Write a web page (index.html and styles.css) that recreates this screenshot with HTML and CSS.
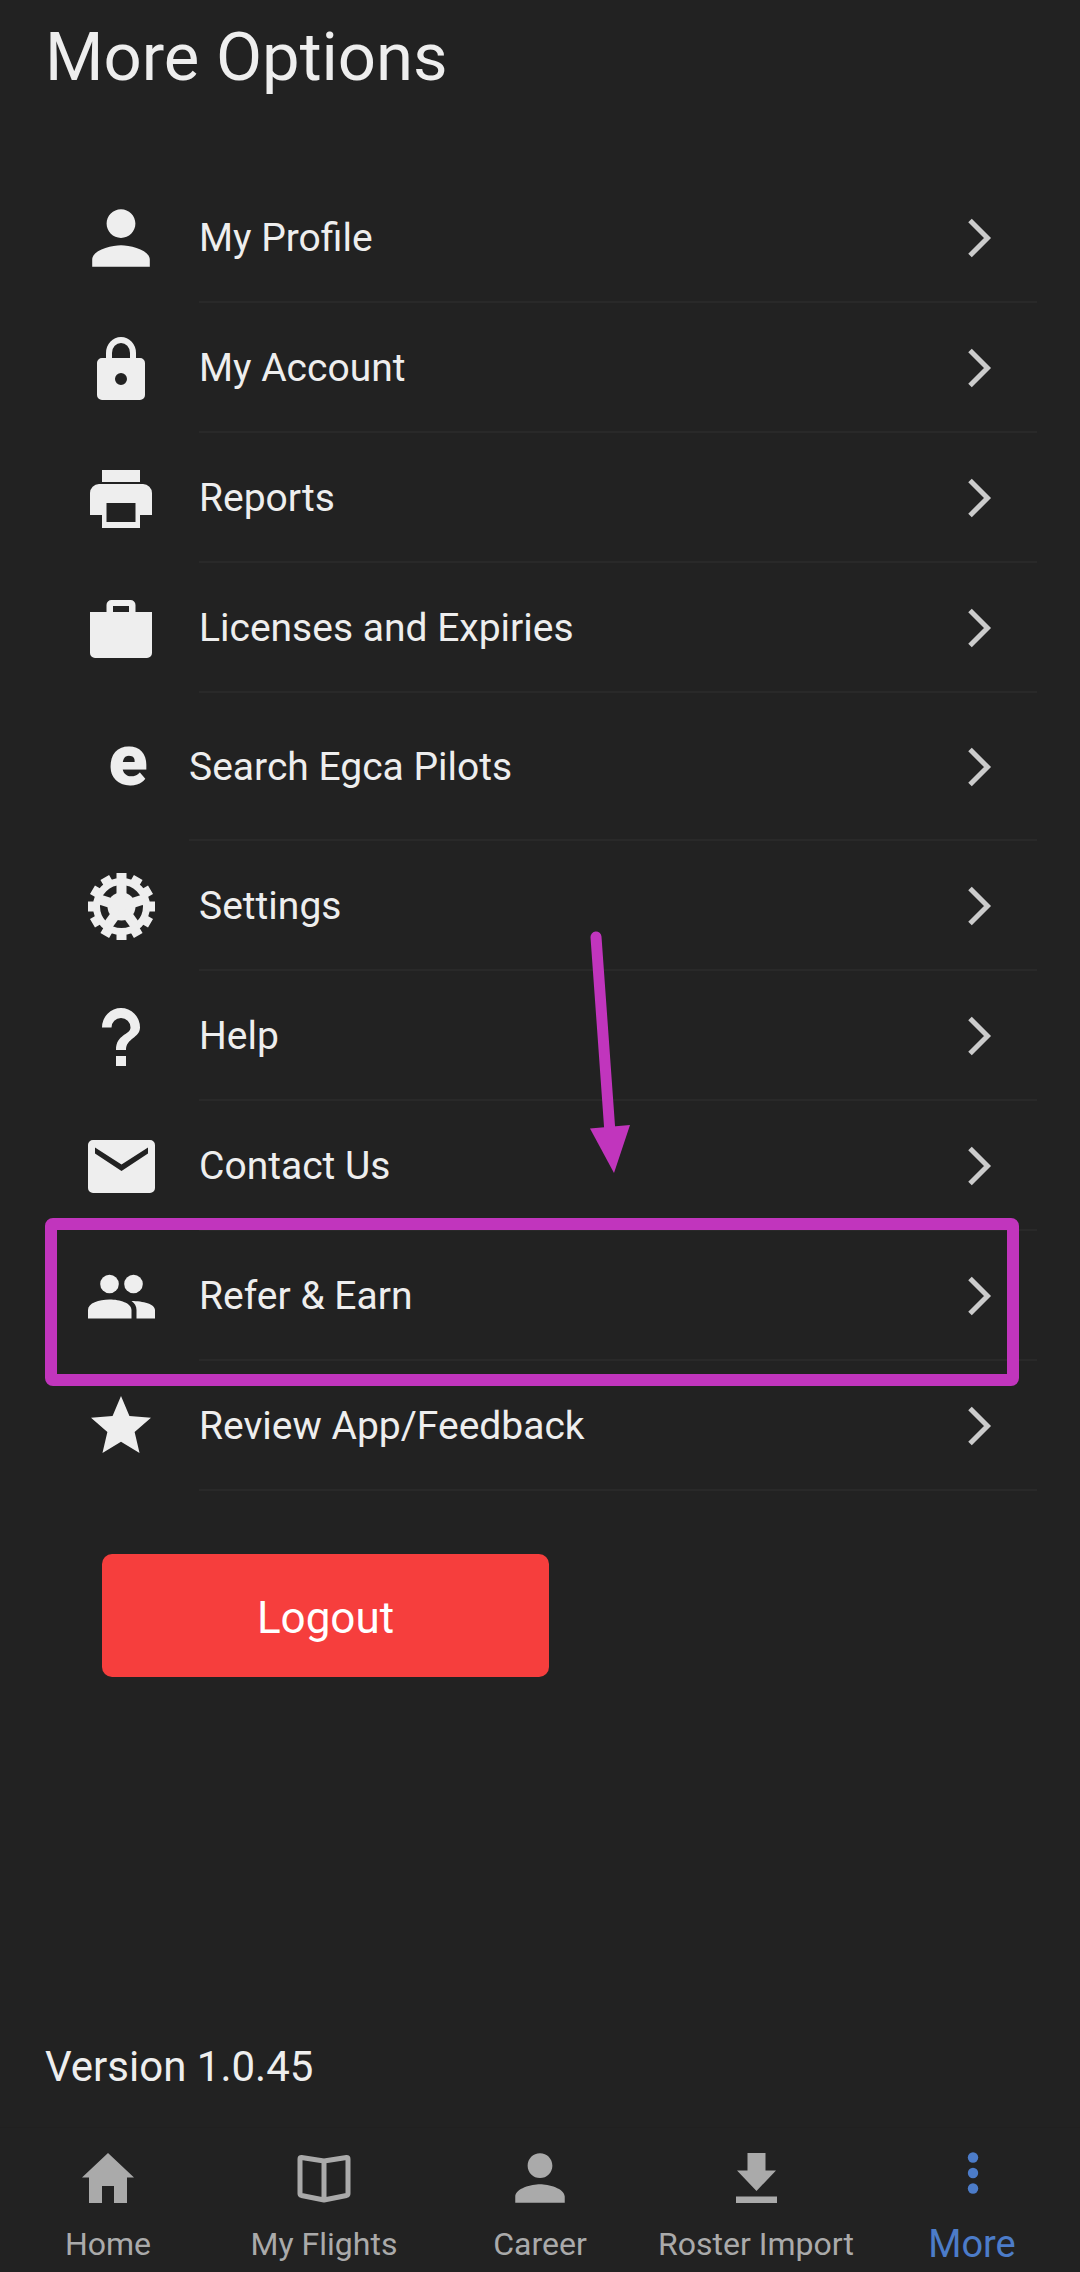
FILE: index.html
```html
<!DOCTYPE html>
<html lang="en">
<head>
<meta charset="utf-8">
<meta name="viewport" content="width=device-width, initial-scale=1">
<title>More Options</title>
<link rel="stylesheet" href="styles.css">
</head>
<body>
<svg class="defs" aria-hidden="true">
  <symbol id="chevron" viewBox="0 0 24 40"><path d="M2 2.500L19.500 20L2 37.500" fill="none" stroke="currentColor" stroke-width="5"/></symbol>
  <symbol id="person" viewBox="2 2 20 20"><path d="M12 12c2.210 0 4-1.790 4-4s-1.790-4-4-4-4 1.790-4 4 1.790 4 4 4zm0 2c-2.670 0-8 1.340-8 4v2h16v-2c0-2.660-5.330-4-8-4z"/></symbol>
</svg>
<main class="page">
  <h1 class="title">More Options</h1>
  <ul class="menu">
    <li><a class="row" href="#profile">
      <svg class="icon"><use href="#person"/></svg>
      <span class="body">My Profile<svg class="chevron"><use href="#chevron"/></svg></span></a></li>
    <li><a class="row" href="#account">
      <svg class="icon" viewBox="0 0 72 72"><path d="M24 28V21a12 13 0 0 1 24 0v7" fill="none" stroke="currentColor" stroke-width="6"/><path fill-rule="evenodd" d="M17 26h38a5 5 0 0 1 5 5v32a5 5 0 0 1-5 5H17a5 5 0 0 1-5-5V31a5 5 0 0 1 5-5zM36 41a6 6 0 1 0 0 12a6 6 0 1 0 0-12z"/></svg>
      <span class="body">My Account<svg class="chevron"><use href="#chevron"/></svg></span></a></li>
    <li><a class="row" href="#reports">
      <svg class="icon" viewBox="0 0 72 72"><path d="M17 8h38v12H17z"/><path fill-rule="evenodd" d="M14 22h44a9 9 0 0 1 9 9v22H55v13H17V53H5V31a9 9 0 0 1 9-9zM21.500 41v19h29V41z"/></svg>
      <span class="body">Reports<svg class="chevron"><use href="#chevron"/></svg></span></a></li>
    <li><a class="row" href="#licenses">
      <svg class="icon" viewBox="0 0 72 72"><path fill-rule="evenodd" d="M5 20h16.500v-7a5 5 0 0 1 5-5h19a5 5 0 0 1 5 5v7H67v41a5 5 0 0 1-5 5H10a5 5 0 0 1-5-5zM28 14v6h16v-6z"/></svg>
      <span class="body">Licenses and Expiries<svg class="chevron"><use href="#chevron"/></svg></span></a></li>
    <li><a class="row row-egca" href="#egca">
      <span class="icon icon-letter" aria-hidden="true">e</span>
      <span class="body">Search Egca Pilots<svg class="chevron"><use href="#chevron"/></svg></span></a></li>
    <li><a class="row" href="#settings">
      <svg class="icon" viewBox="0 0 72 72"><g transform="translate(36.500 36.500)">
        <circle r="25" fill="none" stroke="currentColor" stroke-width="7"/>
        <circle r="14"/>
        <g stroke="currentColor" stroke-width="10">
          <path id="spoke" d="M0 0V-23"/><use href="#spoke" transform="rotate(72)"/><use href="#spoke" transform="rotate(144)"/><use href="#spoke" transform="rotate(216)"/><use href="#spoke" transform="rotate(288)"/>
          <path id="teeth" d="M0-33.500V-25M0 33.500V25"/><use href="#teeth" transform="rotate(30)"/><use href="#teeth" transform="rotate(60)"/><use href="#teeth" transform="rotate(90)"/><use href="#teeth" transform="rotate(120)"/><use href="#teeth" transform="rotate(150)"/>
        </g></g></svg>
      <span class="body">Settings<svg class="chevron"><use href="#chevron"/></svg></span></a></li>
    <li><a class="row" href="#help">
      <svg class="icon" viewBox="0 0 72 72"><path d="M17 27.500A19 19.500 0 0 1 55 27.500C55 38 41 38 41 50H31C31 34 45.500 35 45.500 27.500A9.500 9.500 0 0 0 26.500 27.500zM31 56h10v10H31z"/></svg>
      <span class="body">Help<svg class="chevron"><use href="#chevron"/></svg></span></a></li>
    <li><a class="row" href="#contact">
      <svg class="icon" viewBox="0 0 72 72"><path fill-rule="evenodd" d="M8 10h57a5 5 0 0 1 5 5v43a5 5 0 0 1-5 5H8a5 5 0 0 1-5-5V15a5 5 0 0 1 5-5zM10 17.500v6L36.500 41L63 23.500v-6L36.500 34.500z"/></svg>
      <span class="body">Contact Us<svg class="chevron"><use href="#chevron"/></svg></span></a></li>
    <li class="featured"><a class="row" href="#refer">
      <svg class="icon" viewBox="0 0 72 72"><circle cx="24.500" cy="24" r="9.300"/><circle cx="48.500" cy="24" r="9.300"/><path d="M3 58.500V50c0-7 11-10.500 21.500-10.500S46.500 43 46.500 50v8.500zM46.500 41C58 41 70 44 70 50v8.500H51.500V50c0-4-2-7-5-9z"/></svg>
      <span class="body">Refer &amp; Earn<svg class="chevron"><use href="#chevron"/></svg></span></a>
      <svg class="pointer" viewBox="0 0 48 244" aria-hidden="true"><path d="M10 8L24 204" fill="none" stroke="currentColor" stroke-width="11" stroke-linecap="round"/><path d="M4 199.500L44 196L28 244z"/></svg>
    </li>
    <li><a class="row" href="#review">
      <svg class="icon" viewBox="0 0 24 24"><path d="M12 17.270L18.180 21l-1.640-7.030L22 9.240l-7.190-.610L12 2 9.190 8.630 2 9.240l5.460 4.730L5.820 21z"/></svg>
      <span class="body">Review App/Feedback<svg class="chevron"><use href="#chevron"/></svg></span></a></li>
  </ul>
  <button class="logout" type="button">Logout</button>
  <p class="version">Version 1.0.45</p>
</main>
<nav class="tabs">
  <a class="tab" href="#home"><svg class="tab-icon" viewBox="0 0 60 60"><path d="M30 5L56 29.500H49V55H36V38H24V55H11V29.500H4z"/></svg>Home</a>
  <a class="tab" href="#flights"><svg class="tab-icon" viewBox="0 0 60 60"><path d="M30 13L7.500 9.500Q6 9.500 6 11V45.500Q6 47 7.500 47.500L30 52L52.500 47.500Q54 47 54 45.500V11Q54 9.500 52.500 9.500zV50" fill="none" stroke="currentColor" stroke-width="5" stroke-linejoin="round"/></svg>My Flights</a>
  <a class="tab" href="#career"><svg class="tab-icon" viewBox="2.300 2.300 19.400 19.400"><path d="M12 12c2.210 0 4-1.790 4-4s-1.790-4-4-4-4 1.790-4 4 1.790 4 4 4zm0 2c-2.670 0-8 1.340-8 4v2h16v-2c0-2.660-5.330-4-8-4z"/></svg>Career</a>
  <a class="tab" href="#roster"><svg class="tab-icon" viewBox="0 0 60 60"><path d="M21.500 5h18v17.500H50L30.500 43L11 22.500h10.500zM10 48.500h41V55H10z"/></svg>Roster Import</a>
  <a class="tab tab-active" href="#more" aria-current="page"><svg class="tab-icon" viewBox="0 0 60 60"><circle cx="31" cy="9.500" r="5.200"/><circle cx="31" cy="25" r="5.200"/><circle cx="31" cy="40.500" r="5.200"/></svg>More</a>
</nav>
</body>
</html>
```
FILE: styles.css
```css
* { box-sizing: border-box; }

body {
  margin: 0;
  min-height: 100vh;
  display: flex;
  flex-direction: column;
  background: #222;
  color: #eee;
  font-family: Roboto, "Open Sans", sans-serif;
  font-size: 39px;
}

svg { fill: currentColor; }
a { color: inherit; text-decoration: none; }
.defs { display: none; }

.page {
  flex: 1;
  display: flex;
  flex-direction: column;
}

.title {
  margin: 0;
  padding: 17px 45px 76px;
  font-size: 67px;
  line-height: 80px;
  font-weight: 400;
}

.menu {
  margin: 0;
  padding: 0 43px 0 85px;
  list-style: none;
}

.row {
  display: flex;
  align-items: center;
  gap: 42px;
  height: 130px;
}

.row-egca {
  height: 148px;
  gap: 32px;
}

.icon {
  flex: none;
  width: 72px;
  height: 72px;
}

.icon-letter {
  padding: 0 0 8px 14px;
  font-size: 72px;
  line-height: 60px;
  font-weight: 900;
  text-align: center;
}

.body {
  flex: 1;
  align-self: stretch;
  display: flex;
  align-items: center;
  justify-content: space-between;
  padding: 2px 45px 0 0;
  border-bottom: 2px solid #292929;
}

.chevron {
  width: 24px;
  height: 40px;
  color: #ccc;
}

.featured { position: relative; }

.featured::before {
  content: "";
  position: absolute;
  inset: -13px 18px -25px -40px;
  border: 12px solid #c135bd;
  border-radius: 8px;
  pointer-events: none;
}

.pointer {
  position: absolute;
  left: 53%;
  bottom: 188px;
  width: 48px;
  height: 244px;
  margin-left: -4px;
  color: #c135bd;
}

.logout {
  width: 447px;
  height: 123px;
  margin: 63px 102px;
  padding: 4px 0 0;
  border: 0;
  border-radius: 10px;
  background: #f63e3d;
  color: #fff;
  font: inherit;
  font-size: 44px;
}

.version {
  margin: auto 0 0;
  padding: 0 45px 32px;
  font-size: 42px;
  line-height: 56px;
}

.tabs {
  display: grid;
  grid-template-columns: repeat(5, 1fr);
  padding: 20px 0 10px;
  border-top: 1px solid #202020;
  color: #aaa;
  font-size: 32px;
  line-height: 36px;
}

.tab {
  display: flex;
  flex-direction: column;
  align-items: center;
  justify-content: space-between;
  height: 114px;
  white-space: nowrap;
}

.tab-icon {
  width: 60px;
  height: 60px;
}

.tab-active {
  color: #4c7cc9;
  font-size: 38px;
}
```
